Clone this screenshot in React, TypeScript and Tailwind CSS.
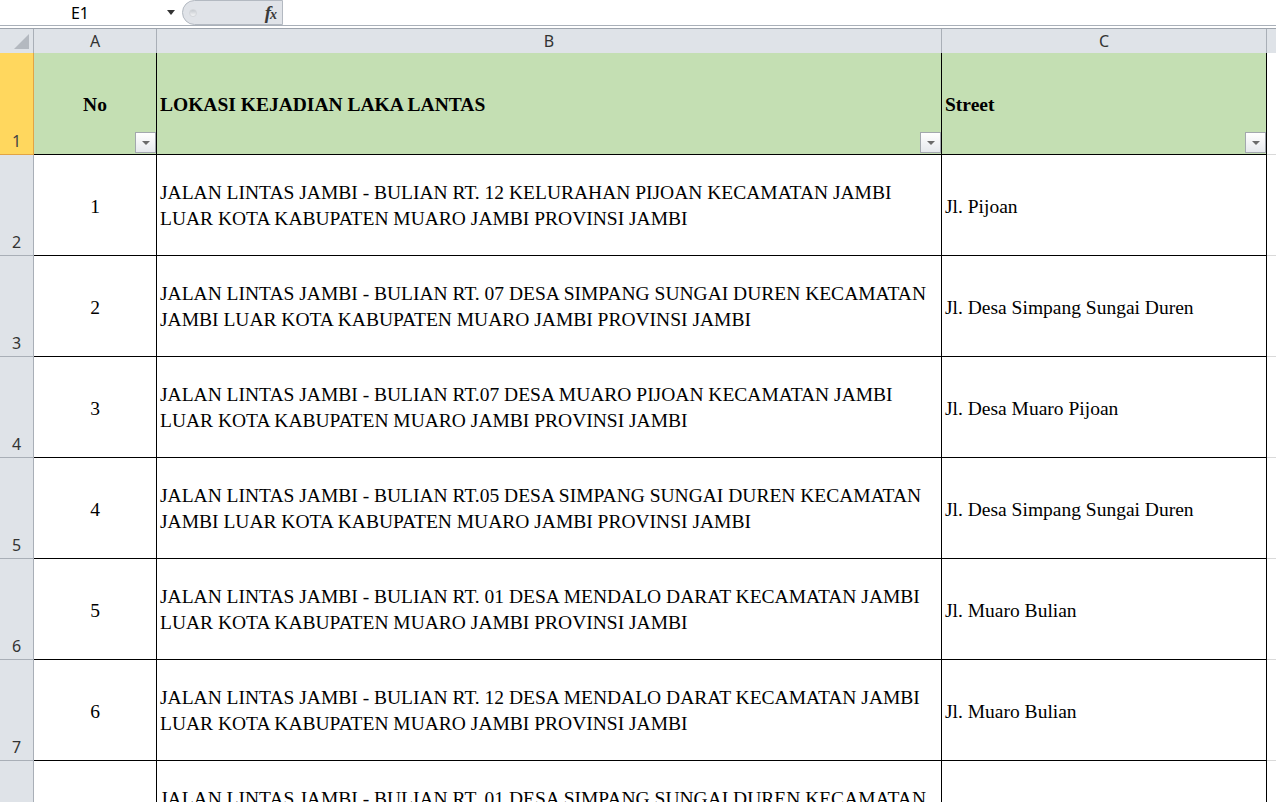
import React from "react";

type Row = {
  no: number;
  lines: [string, string];
  street: string;
};

const rows: Row[] = [
  {
    no: 1,
    lines: [
      "JALAN LINTAS JAMBI - BULIAN RT. 12 KELURAHAN PIJOAN KECAMATAN JAMBI",
      "LUAR KOTA KABUPATEN MUARO JAMBI PROVINSI JAMBI",
    ],
    street: "Jl. Pijoan",
  },
  {
    no: 2,
    lines: [
      "JALAN LINTAS JAMBI - BULIAN RT. 07 DESA SIMPANG SUNGAI DUREN KECAMATAN",
      "JAMBI LUAR KOTA KABUPATEN MUARO JAMBI PROVINSI JAMBI",
    ],
    street: "Jl. Desa Simpang Sungai Duren",
  },
  {
    no: 3,
    lines: [
      "JALAN LINTAS JAMBI - BULIAN RT.07 DESA MUARO PIJOAN KECAMATAN JAMBI",
      "LUAR KOTA KABUPATEN MUARO JAMBI PROVINSI JAMBI",
    ],
    street: "Jl. Desa Muaro Pijoan",
  },
  {
    no: 4,
    lines: [
      "JALAN LINTAS JAMBI - BULIAN RT.05 DESA SIMPANG SUNGAI DUREN KECAMATAN",
      "JAMBI LUAR KOTA KABUPATEN MUARO JAMBI PROVINSI JAMBI",
    ],
    street: "Jl. Desa Simpang Sungai Duren",
  },
  {
    no: 5,
    lines: [
      "JALAN LINTAS JAMBI - BULIAN RT. 01 DESA MENDALO DARAT KECAMATAN JAMBI",
      "LUAR KOTA KABUPATEN MUARO JAMBI PROVINSI JAMBI",
    ],
    street: "Jl. Muaro Bulian",
  },
  {
    no: 6,
    lines: [
      "JALAN LINTAS JAMBI - BULIAN RT. 12 DESA MENDALO DARAT KECAMATAN JAMBI",
      "LUAR KOTA KABUPATEN MUARO JAMBI PROVINSI JAMBI",
    ],
    street: "Jl. Muaro Bulian",
  },
  {
    no: 7,
    lines: [
      "JALAN LINTAS JAMBI - BULIAN RT. 01 DESA SIMPANG SUNGAI DUREN KECAMATAN",
      "JAMBI LUAR KOTA KABUPATEN MUARO JAMBI PROVINSI JAMBI",
    ],
    street: "Jl. Desa Simpang Sungai Duren",
  },
];

const ui = "font-['Segoe_UI','Noto_Sans',sans-serif]";
const serif = "font-['Times_New_Roman','Liberation_Serif',serif]";

// tombol filter kecil di pojok kanan bawah header
const FilterBtn = () => (
  <div className="absolute right-0 bottom-[1px] w-[21px] h-[21px] border border-[#a3a8ae] bg-gradient-to-b from-white to-[#e6e9ed] flex items-center justify-center">
    <div className="w-0 h-0 border-l-[4px] border-r-[4px] border-t-[4px] border-l-transparent border-r-transparent border-t-[#6b6b6b]" />
  </div>
);

export default function App() {
  return (
    <div className={`w-[1276px] h-[802px] overflow-hidden bg-white ${ui}`}>
      {/* FORMULA BAR */}
      <div className="flex h-[26px] border-b border-[#a9b0b9] bg-white">
        <div className="w-[160px] flex items-center justify-center text-[16px] text-black pt-[1px]">E1</div>
        <div className="w-[22px] flex items-center justify-center">
          <div className="w-0 h-0 border-l-[4px] border-r-[4px] border-t-[5px] border-l-transparent border-r-transparent border-t-[#333]" />
        </div>
        <div className="w-[101px] h-[25px] rounded-l-full border border-[#b3b9c1] bg-[#e0e3e8] flex items-center justify-between pl-[6px] pr-[6px]">
          <div className="w-[8px] h-[8px] rounded-full bg-gradient-to-b from-[#c6cacf] to-[#f4f5f7] border border-[#d3d6da]" />
          <span className={`${serif} italic font-bold text-[19px] text-[#3a3a3a] leading-none tracking-[-1px]`}>
            f<span className="text-[14px]">x</span>
          </span>
        </div>
        <div className="flex-1" />
      </div>
      <div className="h-[2px] bg-white" />

      {/* COLUMN HEADERS */}
      <div className="flex h-[25px] border-t border-[#9da4ad] bg-[#dfe3e8] text-[16px] text-[#333]">
        <div className="relative w-[34px] border-r border-[#a9afb7]">
          <svg className="absolute right-[4px] bottom-[4px]" width="15" height="15" viewBox="0 0 15 15">
            <polygon points="15,0 15,15 0,15" fill="#b4b9c0" />
          </svg>
        </div>
        <div className="w-[123px] border-r border-[#a9afb7] flex items-center justify-center">A</div>
        <div className="w-[785px] border-r border-[#a9afb7] flex items-center justify-center">B</div>
        <div className="w-[325px] border-r border-[#a9afb7] flex items-center justify-center">C</div>
        <div className="flex-1" />
      </div>

      {/* ROW 1 - HEADER TABEL */}
      <div className="flex h-[102px]">
        <div className="w-[34px] bg-[#ffd75e] border-r border-b border-[#e2a444] flex items-end justify-center pb-[1px] text-[16px] text-[#444]">
          1
        </div>
        <div className={`relative w-[123px] bg-[#c4dfb3] border-r border-b border-black flex items-center justify-center pt-[3px] font-bold text-[19.5px] ${serif}`}>
          No
          <FilterBtn />
        </div>
        <div className={`relative w-[785px] bg-[#c4dfb3] border-r border-b border-black flex items-center pl-[3px] pt-[3px] font-bold text-[19.5px] ${serif}`}>
          LOKASI KEJADIAN LAKA LANTAS
          <FilterBtn />
        </div>
        <div className={`relative w-[325px] bg-[#c4dfb3] border-r border-b border-black flex items-center pl-[3px] pt-[3px] font-bold text-[19.5px] ${serif}`}>
          Street
          <FilterBtn />
        </div>
        <div className="flex-1 border-b border-[#d9d9d9]" />
      </div>

      {/* DATA */}
      {rows.map((r, i) => (
        <div key={i} className="flex h-[101px]">
          <div className="w-[34px] bg-[#dfe3e8] border-r border-b border-[#a9afb7] flex items-end justify-center pb-[1px] text-[16px] text-[#333]">
            {i + 2}
          </div>
          <div className={`w-[123px] border-r border-b border-black flex items-center justify-center pt-[3px] text-[19.5px] ${serif}`}>
            {r.no}
          </div>
          <div className={`w-[785px] border-r border-b border-black flex flex-col justify-center pl-[3px] pt-[2px] text-[19.5px] leading-[26px] whitespace-nowrap overflow-hidden ${serif}`}>
            <span>{r.lines[0]}</span>
            <span>{r.lines[1]}</span>
          </div>
          <div className={`w-[325px] border-r border-b border-black flex items-center pl-[3px] pt-[3px] text-[19.5px] whitespace-nowrap overflow-hidden ${serif}`}>
            {r.street}
          </div>
          <div className="flex-1 border-b border-[#d9d9d9]" />
        </div>
      ))}
    </div>
  );
}
